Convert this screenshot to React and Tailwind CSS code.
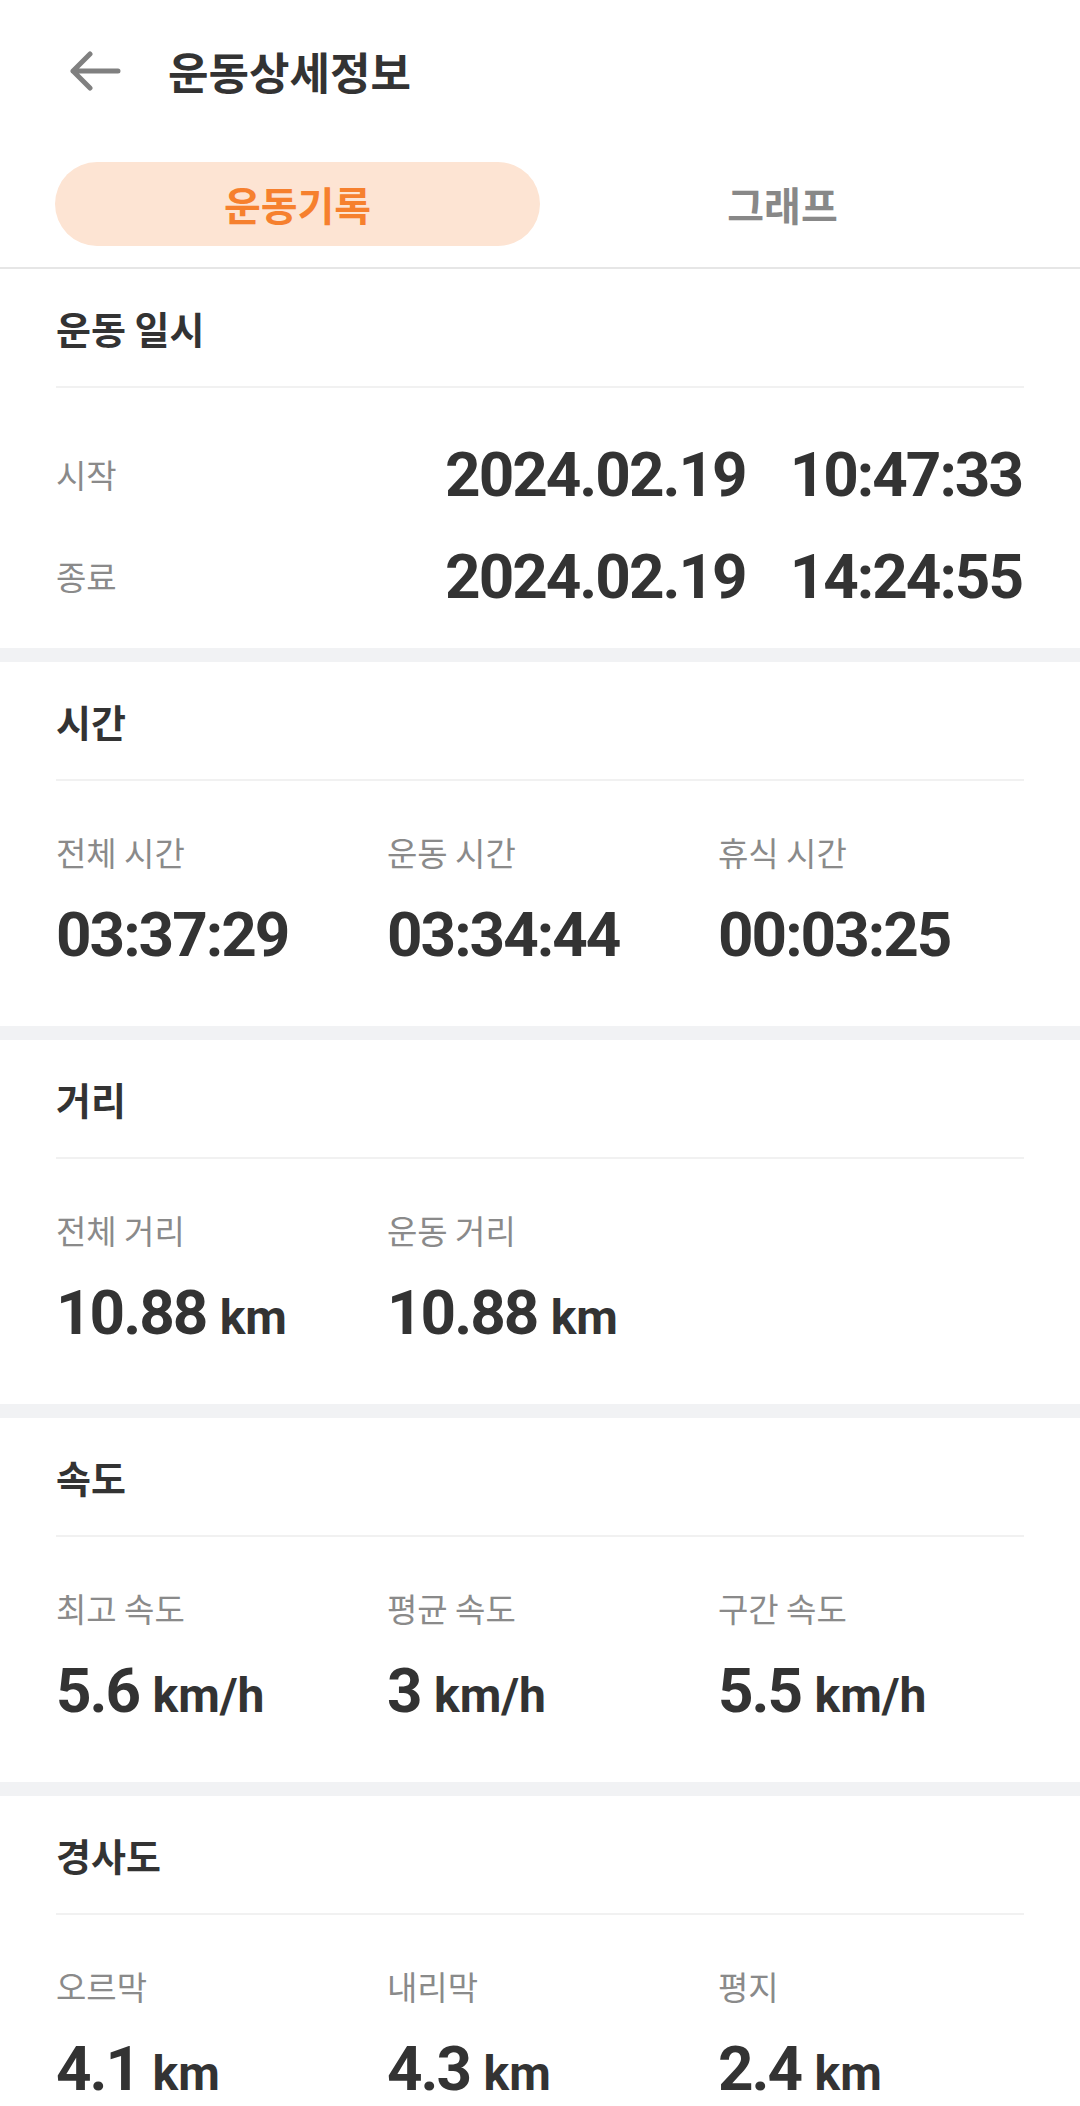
const sections = [
  {
    title: "시간",
    items: [
      { label: "전체 시간", value: "03:37:29" },
      { label: "운동 시간", value: "03:34:44" },
      { label: "휴식 시간", value: "00:03:25" },
    ],
  },
  {
    title: "거리",
    items: [
      { label: "전체 거리", value: "10.88", unit: "km" },
      { label: "운동 거리", value: "10.88", unit: "km" },
    ],
  },
  {
    title: "속도",
    items: [
      { label: "최고 속도", value: "5.6", unit: "km/h" },
      { label: "평균 속도", value: "3", unit: "km/h" },
      { label: "구간 속도", value: "5.5", unit: "km/h" },
    ],
  },
  {
    title: "경사도",
    items: [
      { label: "오르막", value: "4.1", unit: "km" },
      { label: "내리막", value: "4.3", unit: "km" },
      { label: "평지", value: "2.4", unit: "km" },
    ],
  },
];

function SectionTitle({ children }) {
  return (
    <div className="flex h-[119px] items-center border-b-2 border-[#f1f1f1]">
      <h2 className="text-[38px] font-semibold leading-none text-[#333333]">{children}</h2>
    </div>
  );
}

function Num({ value, unit }) {
  return (
    <span className="font-['Roboto',sans-serif] text-[62px] font-bold leading-[64px] tracking-[-2px] text-[#333333]">
      {value}
      {unit && (
        <>
          {" "}
          <span className="text-[48px] tracking-normal">{unit}</span>
        </>
      )}
    </span>
  );
}

function StatSection({ title, items }) {
  return (
    <section className="h-[364px] overflow-hidden bg-white px-[56px]">
      <SectionTitle>{title}</SectionTitle>
      <div className="grid grid-cols-[331px_331px_1fr] pt-[51px]">
        {items.map((it) => (
          <div key={it.label} className="flex flex-col">
            <span className="h-[40px] text-[33px] leading-[40px] text-[#8a8a8a]">{it.label}</span>
            <div className="mt-[25px] h-[64px] whitespace-nowrap text-[62px] leading-[64px]">
              <Num value={it.value} unit={it.unit} />
            </div>
          </div>
        ))}
      </div>
    </section>
  );
}

export default function App() {
  return (
    <div className="min-h-screen bg-white font-['Noto_Sans_CJK_KR',sans-serif]">
      <header className="flex h-[142px] items-center pl-[69px]">
        <svg width="52" height="40" viewBox="0 0 52 40" fill="none" stroke="#808080" strokeWidth="5" strokeLinecap="round" strokeLinejoin="round">
          <path d="M49 20H4M21 3L4 20l17 17" />
        </svg>
        <h1 className="ml-[47px] text-[44px] font-semibold leading-none text-[#333333]">운동상세정보</h1>
      </header>

      <div className="grid grid-cols-2 border-b-2 border-[#e6e6e6] px-[55px] pb-[21px] pt-[20px]">
        <button className="flex h-[84px] items-center justify-center rounded-full bg-[#fde4d3] text-[40px] font-semibold text-[#f6802e]">
          운동기록
        </button>
        <button className="flex h-[84px] items-center justify-center text-[40px] font-semibold text-[#888888]">
          그래프
        </button>
      </div>

      <section className="h-[379px] bg-white px-[56px]">
        <SectionTitle>운동 일시</SectionTitle>
        <div className="flex flex-col gap-[32px] pt-[52px]">
          {[
            ["시작", "2024.02.19", "10:47:33"],
            ["종료", "2024.02.19", "14:24:55"],
          ].map(([label, date, time]) => (
            <div key={label} className="flex h-[70px] items-center justify-between">
              <span className="text-[33px] text-[#8a8a8a]">{label}</span>
              <div className="flex gap-[44px] pr-[2px]">
                <Num value={date} />
                <Num value={time} />
              </div>
            </div>
          ))}
        </div>
      </section>

      {sections.map((s) => (
        <div key={s.title}>
          <div className="h-[14px] bg-[#f1f2f4]" />
          <StatSection title={s.title} items={s.items} />
        </div>
      ))}
    </div>
  );
}
